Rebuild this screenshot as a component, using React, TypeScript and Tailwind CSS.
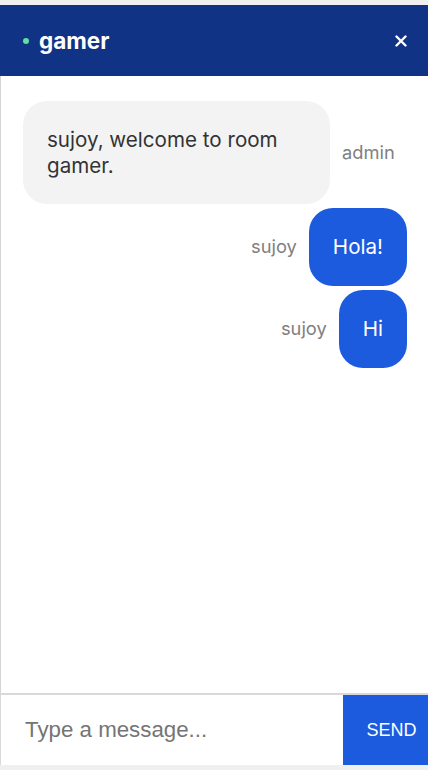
import { useState } from "react";

type Msg = { id: number; user: string; text: string; self: boolean };

const messages: Msg[] = [
  { id: 1, user: "admin", text: "sujoy, welcome to room gamer.", self: false },
  { id: 2, user: "sujoy", text: "Hola!", self: true },
  { id: 3, user: "sujoy", text: "Hi", self: true },
];

function Message({ msg }: { msg: Msg }) {
  if (msg.self) {
    return (
      <div className="flex items-center justify-end gap-3">
        <span className="text-[18.3px] text-[#808080]">{msg.user}</span>
        <div className="rounded-[24px] bg-[#1c5ade] px-6 py-[26px] text-[20.6px] leading-[26px] text-white">
          {msg.text}
        </div>
      </div>
    );
  }
  return (
    <div className="flex items-center gap-3">
      <div className="w-[307px] rounded-[24px] bg-[#f3f3f3] px-6 py-[25.5px] text-[20.6px] leading-[26px] text-[#333]">
        {msg.text}
      </div>
      <span className="text-[18.3px] text-[#808080]">{msg.user}</span>
    </div>
  );
}

export default function App() {
  const [text, setText] = useState("");

  return (
    <div className="h-[770px] bg-[#f0f0f0] pt-[5px] font-['Inter',sans-serif]">
      <div className="flex h-[760px] flex-col bg-white">
        <div className="flex h-[71px] items-center justify-between bg-[#113385] pl-[23px] pr-5 text-white">
          <div className="flex items-center gap-[10px]">
            <span className="h-[6px] w-[6px] rounded-full bg-[#5fe0a0]" />
            <span className="text-[22.5px] font-bold">gamer</span>
          </div>
          <svg width="12" height="12" viewBox="0 0 12 12" className="mr-[1px]">
            <path d="M1.5 1.5 L10.5 10.5 M10.5 1.5 L1.5 10.5" stroke="white" strokeWidth="2.4" strokeLinecap="round" />
          </svg>
        </div>

        <div className="flex flex-1 flex-col gap-1 border-l border-[#d4d4d4] pb-4 pl-[22px] pr-[21px] pt-[25px]">
          {messages.map((m) => (
            <Message key={m.id} msg={m} />
          ))}
        </div>

        <form
          className="flex h-[72px] border-l border-t-2 border-[#d9d9d9]"
          onSubmit={(e) => {
            e.preventDefault();
            setText("");
          }}
        >
          <input
            value={text}
            onChange={(e) => setText(e.target.value)}
            placeholder="Type a message..."
            className="min-w-0 flex-1 pl-6 pr-4 font-['Liberation_Sans',Arial,sans-serif] text-[22.3px] text-[#333] placeholder:text-[#757575] outline-none"
          />
          <button
            type="submit"
            className="w-[85px] bg-[#1c5ade] pl-3 font-['Liberation_Sans',Arial,sans-serif] text-[18px] text-white"
          >
            SEND
          </button>
        </form>
      </div>
    </div>
  );
}
